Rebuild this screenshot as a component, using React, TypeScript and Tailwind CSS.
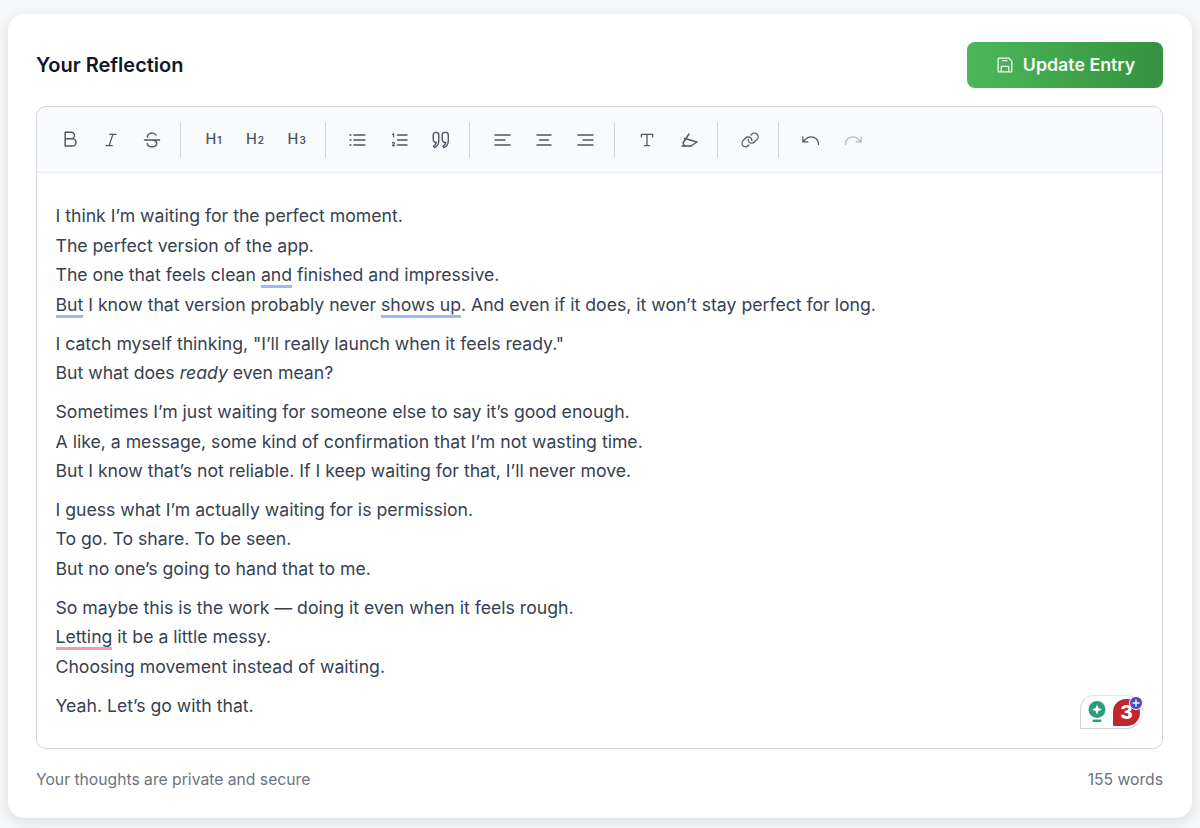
import React from "react";
import {
  PiTextB, PiTextItalic, PiTextStrikethrough, PiTextT, PiLink, PiArrowArcLeft, PiArrowArcRight, PiFloppyDisk,
} from "react-icons/pi";

const Svg = ({ size = 20, children }: { size?: number; children: React.ReactNode }) => (
  <svg width={size} height={size} viewBox="0 0 20 20" fill="none" stroke="currentColor" strokeWidth="1.4" strokeLinecap="round" strokeLinejoin="round">
    {children}
  </svg>
);
const Quote = ({ size = 20 }: { size?: number }) => (
  <Svg size={size}>
    <path d="M2.2 5a2.6 2.6 0 0 1 2.6-2.6h.4A2.6 2.6 0 0 1 7.8 5v5.4c0 3.6-1.6 6-4.4 7.2l-.9-1.5c1.7-.9 2.6-2.1 2.8-3.6h-.1a2.6 2.6 0 0 1-2.9-2.6Z" />
    <path d="M11.2 5a2.6 2.6 0 0 1 2.6-2.6h.9A2.6 2.6 0 0 1 17.3 5v5.4c0 3.6-1.6 6-4.4 7.2l-.9-1.5c1.7-.9 2.6-2.1 2.8-3.6h-.6a2.6 2.6 0 0 1-2.9-2.6Z" />
  </Svg>
);
const Marker = ({ size = 20 }: { size?: number }) => (
  <Svg size={size}>
    <path d="M3 16h9" />
    <path d="M10 4L4 13l1.5 3" />
    <path d="M5.5 8.5L18 12l-6 4" />
  </Svg>
);
const ListDots = ({ size = 20 }: { size?: number }) => (
  <Svg size={size}>
    <path d="M6 5h11M6 10h11M6 15h11" />
    <path d="M2 5h1M2 10h1M2 15h1" />
  </Svg>
);
const ListNums = ({ size = 20 }: { size?: number }) => (
  <Svg size={size}>
    <path d="M7.5 5h9.5M7.5 10h9.5M7.5 15h9.5" />
    <path d="M2.5 4.5l1.2-.9v3.4" strokeWidth="1.1" />
    <path d="M2.4 13c.4-.9 2.2-.7 2 .4-.1.6-1.6 1.3-2 2.2h2.2" strokeWidth="1.1" />
  </Svg>
);
const AlignL = ({ size = 20 }: { size?: number }) => (
  <Svg size={size}><path d="M3 5h15M3 10h10M3 15h15" /></Svg>
);
const AlignC = ({ size = 20 }: { size?: number }) => (
  <Svg size={size}><path d="M3 5h14M5.5 10h9M3 15h14" /></Svg>
);
const AlignR = ({ size = 20 }: { size?: number }) => (
  <Svg size={size}><path d="M2 5h15M7 10h10M2 15h15" /></Svg>
);
const Bold = () => <PiTextB size={23} />;
const Strike = () => <PiTextStrikethrough size={22} />;
const Heading = ({ n }: { n: string }) => (
  <span className="flex items-baseline font-['Inter',sans-serif] leading-none font-medium">
    <span className="text-[14.5px]">H</span>
    <span className="ml-[1px] text-[10px] font-semibold">{n}</span>
  </span>
);

type I = React.ComponentType<{ size?: number; className?: string }>;
const Btn = ({ icon: Icon, dim }: { icon: I; dim?: boolean }) => (
  <button className={`flex h-[32px] w-[32px] items-center justify-center ${dim ? "text-[#b4b9c2]" : "text-[#4b5563]"}`}>
    <Icon size={20} />
  </button>
);
const Group = ({ items }: { items: I[] }) => (
  <div className="flex gap-[9.6px]">{items.map((x, i) => <Btn key={i} icon={x} />)}</div>
);
const Sep = () => <div className="mr-[16px] ml-[12.3px] h-[36px] w-px bg-[#d1d5db]" />;
const Blue = ({ children }: { children: React.ReactNode }) => (
  <span className="border-b-[3px] border-[#9db9f4]">{children}</span>
);
const H1: I = () => <Heading n="1" />;
const H2: I = () => <Heading n="2" />;
const H3: I = () => <Heading n="3" />;

export default function App() {
  return (
    <div className="h-[828px] overflow-hidden bg-[#f6f7f9] pr-[8px] pl-[8px] pt-[14px] font-['Inter',sans-serif]">
      <div className="h-[804px] rounded-[16px] bg-white pr-[29px] pl-[28px] pt-[28px] shadow-[0_4px_14px_rgba(0,0,0,0.1)]">
        <div className="flex h-[46px] items-center justify-between">
          <h2 className="text-[20px] leading-[46px] font-semibold text-[#111827]">Your Reflection</h2>
          <button className="flex h-[46px] w-[196px] items-center justify-center gap-[8px] rounded-[8px] bg-gradient-to-r from-[#4cb85a] to-[#35923f] text-[17.8px] font-semibold text-[#f4fbf5]">
            <PiFloppyDisk size={20} />
            Update Entry
          </button>
        </div>
        <div className="relative mt-[18px] h-[643px] rounded-[10px] border border-[#d1d5db]">
          <div className="flex h-[66px] items-center rounded-t-[10px] border-b border-[#e5e7eb] bg-[#f9fafb] pl-[16px]">
            <Group items={[Bold, PiTextItalic, Strike]} />
            <Sep />
            <Group items={[H1, H2, H3]} />
            <Sep />
            <Group items={[ListDots, ListNums, Quote]} />
            <Sep />
            <Group items={[AlignL, AlignC, AlignR]} />
            <Sep />
            <Group items={[PiTextT, Marker]} />
            <Sep />
            <Group items={[PiLink]} />
            <Sep />
            <div className="flex gap-[9.6px]">
              <Btn icon={PiArrowArcLeft} />
              <Btn icon={PiArrowArcRight} dim />
            </div>
          </div>
          <div className="flex flex-col gap-[8.8px] px-[18.5px] pt-[28px] text-[17.65px] leading-[29.7px] text-[#374151]">
            <p>I think I’m waiting for the perfect moment.<br />The perfect version of the app.<br />The one that feels clean <Blue>and</Blue> finished and impressive.<br /><Blue>But</Blue> I know that version probably never <Blue>shows up</Blue>. And even if it does, it won’t stay perfect for long.</p>
            <p>I catch myself thinking, "I’ll really launch when it feels ready."<br />But what does <em>ready</em> even mean?</p>
            <p>Sometimes I’m just waiting for someone else to say it’s good enough.<br />A like, a message, some kind of confirmation that I’m not wasting time.<br />But I know that’s not reliable. If I keep waiting for that, I’ll never move.</p>
            <p>I guess what I’m actually waiting for is permission.<br />To go. To share. To be seen.<br />But no one’s going to hand that to me.</p>
            <p>So maybe this is the work — doing it even when it feels rough.<br /><span className="border-b-[3px] border-[#f29dac]">Letting</span> it be a little messy.<br />Choosing movement instead of waiting.</p>
            <p>Yeah. Let’s go with that.</p>
          </div>
          <div className="absolute right-[19px] bottom-[19px] flex h-[34px] w-[63px] items-center rounded-tl-[14px] rounded-tr-[16px] rounded-br-[16px] border border-b-[#d1d5db] border-l-[#d1d5db] border-r-[#e5e7eb] border-t-[#e5e7eb] bg-white">
            <svg width="20" height="24" viewBox="0 0 20 24" className="ml-[6px]">
              <circle cx="10" cy="9.5" r="8.5" fill="#2a9d7f" />
              <path d="M10 4.5 L11.4 8.1 L15 9.5 L11.4 10.9 L10 14.5 L8.6 10.9 L5 9.5 L8.6 8.1 Z" fill="#fff" />
              <rect x="5.5" y="19.5" width="9" height="2.5" rx="1" fill="#2a9d7f" />
            </svg>
            <div className="relative ml-[6px] flex h-[27px] w-[27px] items-center justify-center rounded-tl-[13px] rounded-tr-[13px] rounded-br-[13px] rounded-bl-[1px] bg-[#c0272d] text-[19px] leading-none font-extrabold text-white">
              3
            </div>
            <div className="absolute top-[0px] right-[-1px] flex h-[14px] w-[14px] items-center justify-center rounded-full border border-white bg-[#4f46c8]">
              <svg width="8" height="8" viewBox="0 0 8 8"><path d="M4 0.5V7.5M0.5 4H7.5" stroke="#fff" strokeWidth="1.4" /></svg>
            </div>
          </div>
        </div>
        <div className="mt-[20px] flex items-center justify-between text-[15.7px] leading-[22px] text-[#6b7280]">
          <span>Your thoughts are private and secure</span>
          <span>155 words</span>
        </div>
      </div>
    </div>
  );
}
